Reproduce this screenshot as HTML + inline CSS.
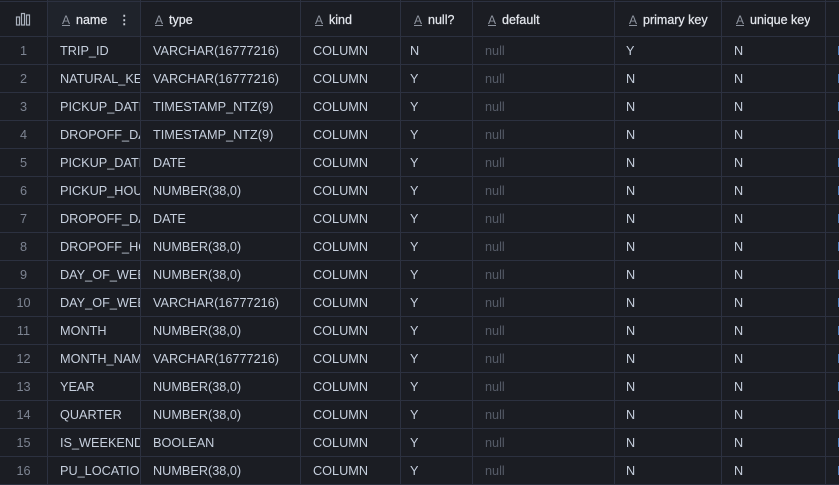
<!DOCTYPE html>
<html><head><meta charset="utf-8"><style>
*{margin:0;padding:0;box-sizing:border-box}
body{width:839px;height:484px;background:#1b1d23;overflow:hidden;font-family:"Liberation Sans",sans-serif;font-size:12.7px;color:#c6cfdd;position:relative}
.hl{position:absolute;left:0;width:839px;height:1px;background:#2c3140}
.vl{position:absolute;top:0;height:484px;width:1px;background:#2c3140}
.t{position:absolute;white-space:nowrap;overflow:hidden}
.h{color:#e3e6ec;font-weight:normal;font-size:12.5px;-webkit-text-stroke:0.25px #e3e6ec}
.a{display:inline-block;color:#8e949f;font-weight:normal;text-decoration:underline;margin-right:6px;font-size:12px;-webkit-text-stroke:0}
.n{color:#7d8492;text-align:center;width:47px}
.nl{color:#555b67}
</style></head><body>
<div style="position:absolute;left:48px;top:0;width:92px;height:36px;background:#1f232b"></div>
<div class="hl" style="top:1px"></div>
<div class="hl" style="top:36px"></div>
<svg style="position:absolute;left:15px;top:12px" width="16" height="14"><g fill="none" stroke="#aab1bd" stroke-width="1.2"><rect x="1.5" y="5" width="3" height="8"/><rect x="6.5" y="1.5" width="3" height="11.5"/><rect x="11.5" y="3" width="3" height="10"/></g></svg>
<div id="g"></div>
<script>
var cols=[47,140,300,400,472,614,721,825];
var h='';
cols.forEach(function(x){h+='<div class="vl" style="left:'+x+'px"></div>';});
for(var i=1;i<=16;i++){h+='<div class="hl" style="top:'+(36+28*i)+'px"></div>';}
var hdr=[[62,'name'],[155,'type'],[315,'kind'],[414,'null?'],[488,'default'],[629,'primary key'],[736,'unique key']];
hdr.forEach(function(c){h+='<div class="t h" style="left:'+c[0]+'px;top:13px">'+'<span class="a">A</span>'+c[1]+'</div>';});
h+='<div class="t" style="left:118px;top:12px;color:#c8cdd6;font-weight:bold">&#8942;</div>';
var names=['TRIP_ID','NATURAL_KEY','PICKUP_DATETIME','DROPOFF_DATETIME','PICKUP_DATE','PICKUP_HOUR','DROPOFF_DATE','DROPOFF_HOUR','DAY_OF_WEEK','DAY_OF_WEEK_NAME','MONTH','MONTH_NAME','YEAR','QUARTER','IS_WEEKEND','PU_LOCATION'];
var types=['VARCHAR(16777216)','VARCHAR(16777216)','TIMESTAMP_NTZ(9)','TIMESTAMP_NTZ(9)','DATE','NUMBER(38,0)','DATE','NUMBER(38,0)','NUMBER(38,0)','VARCHAR(16777216)','NUMBER(38,0)','VARCHAR(16777216)','NUMBER(38,0)','NUMBER(38,0)','BOOLEAN','NUMBER(38,0)'];
for(var i=0;i<16;i++){var y=36+28*i+8;
h+='<div class="t n" style="left:0;top:'+y+'px">'+(i+1)+'</div>';
h+='<div class="t" style="left:60px;top:'+y+'px;width:80px">'+names[i]+'</div>';
h+='<div class="t" style="left:153px;top:'+y+'px">'+types[i]+'</div>';
h+='<div class="t" style="left:313px;top:'+y+'px">COLUMN</div>';
h+='<div class="t" style="left:410px;top:'+y+'px">'+(i==0?'N':'Y')+'</div>';
h+='<div class="t nl" style="left:485px;top:'+y+'px">null</div>';
h+='<div class="t" style="left:626px;top:'+y+'px">'+(i==0?'Y':'N')+'</div>';
h+='<div class="t" style="left:734px;top:'+y+'px">N</div>';
h+='<div class="t" style="left:837px;top:'+y+'px;width:2px;color:#4a7fc0">N</div>';}
document.getElementById('g').innerHTML=h;
</script>
</body></html>
